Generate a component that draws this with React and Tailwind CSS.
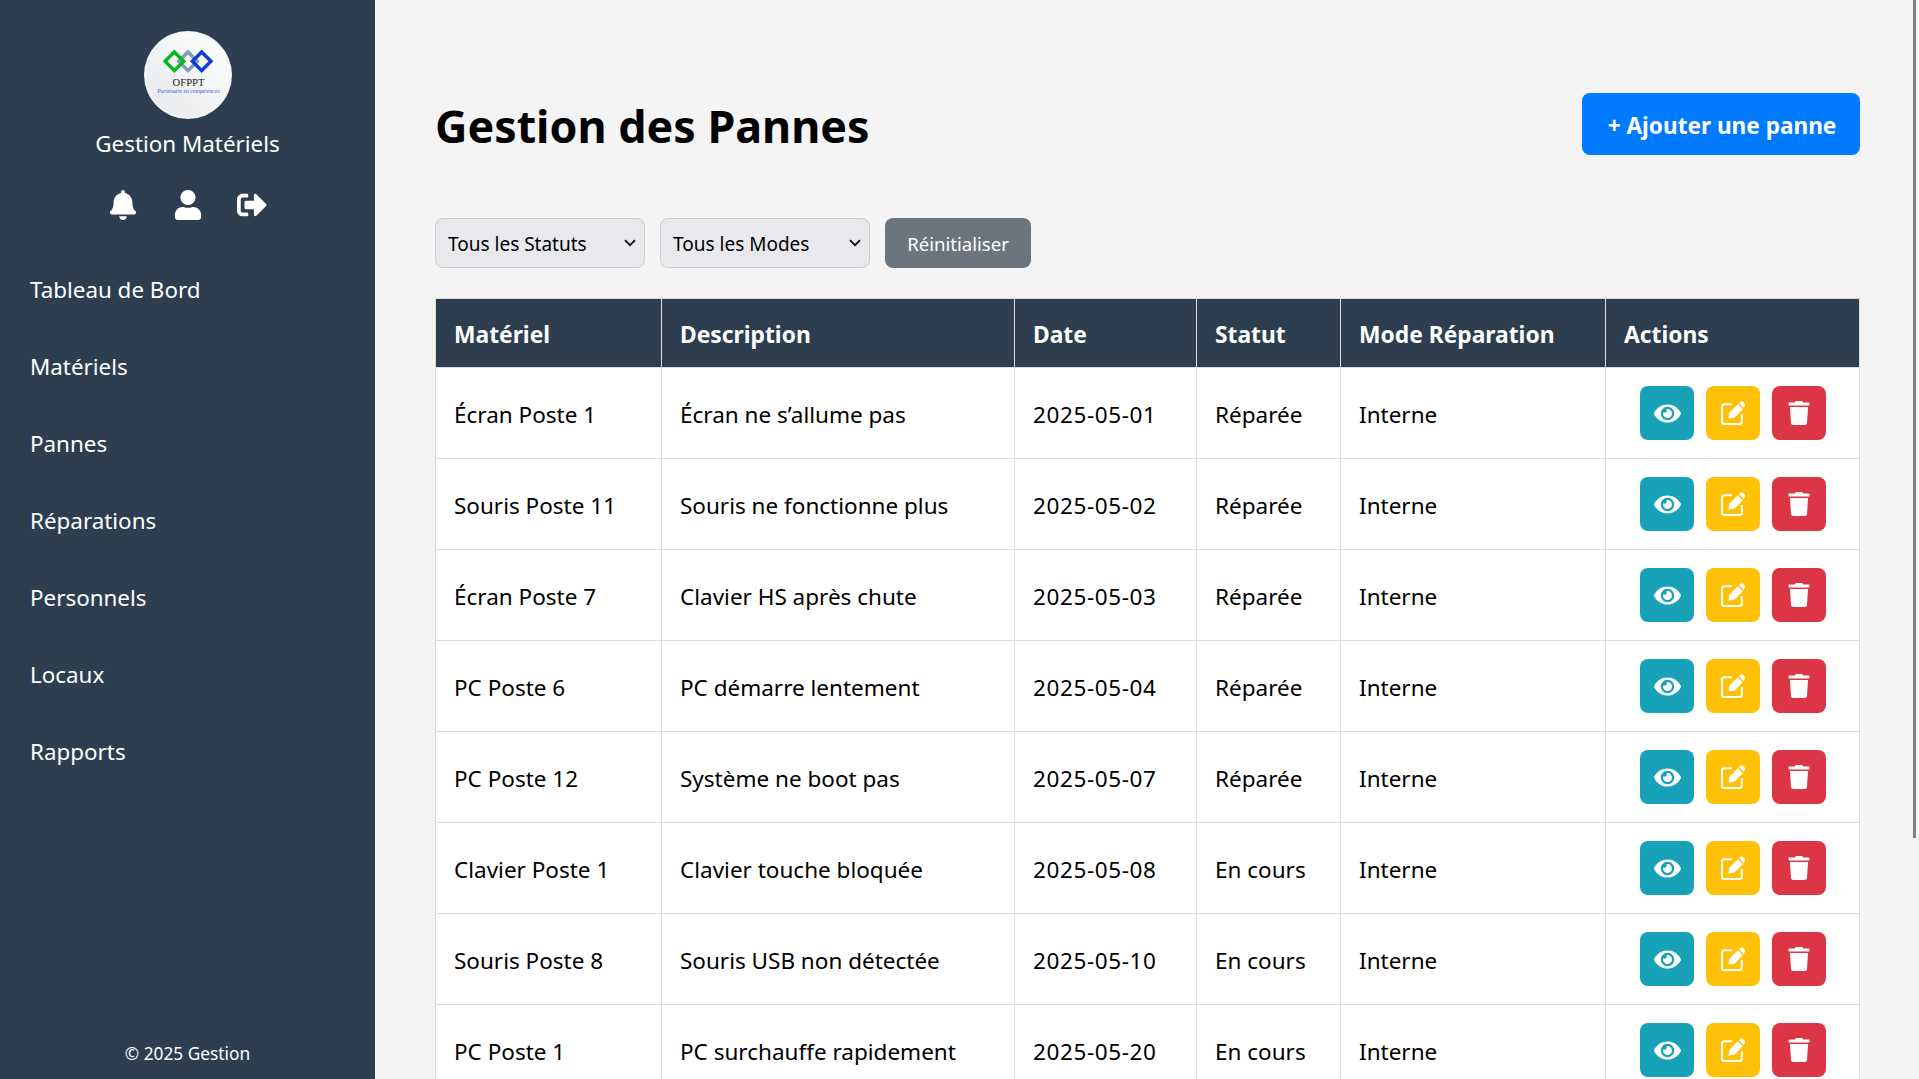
import { FaBell, FaUser, FaSignOutAlt, FaEye, FaTrash } from 'react-icons/fa'

const nav = ['Tableau de Bord', 'Matériels', 'Pannes', 'Réparations', 'Personnels', 'Locaux', 'Rapports']

const rows = [
  ['Écran Poste 1', 'Écran ne s’allume pas', '2025-05-01', 'Réparée', 'Interne'],
  ['Souris Poste 11', 'Souris ne fonctionne plus', '2025-05-02', 'Réparée', 'Interne'],
  ['Écran Poste 7', 'Clavier HS après chute', '2025-05-03', 'Réparée', 'Interne'],
  ['PC Poste 6', 'PC démarre lentement', '2025-05-04', 'Réparée', 'Interne'],
  ['PC Poste 12', 'Système ne boot pas', '2025-05-07', 'Réparée', 'Interne'],
  ['Clavier Poste 1', 'Clavier touche bloquée', '2025-05-08', 'En cours', 'Interne'],
  ['Souris Poste 8', 'Souris USB non détectée', '2025-05-10', 'En cours', 'Interne'],
  ['PC Poste 1', 'PC surchauffe rapidement', '2025-05-20', 'En cours', 'Interne'],
]

const headers = ['Matériel', 'Description', 'Date', 'Statut', 'Mode Réparation', 'Actions']

function Logo() {
  return (
    <svg viewBox="0 0 87 87" className="w-[88px] h-[88px]">
      <defs>
        <linearGradient id="disc" x1="0" y1="1" x2="1" y2="0">
          <stop offset="0" stopColor="#e6e8ea" />
          <stop offset="1" stopColor="#ffffff" />
        </linearGradient>
      </defs>
      <circle cx="43.5" cy="43.5" r="43.5" fill="#f2f5f7" />
      <circle cx="43.5" cy="43.5" r="41.5" fill="url(#disc)" />
      <rect x="37" y="23.5" width="13" height="13" transform="rotate(45 43.5 30)" fill="none" stroke="#7f9db8" strokeWidth="3.4" />
      <rect x="23.5" y="23.5" width="13" height="13" transform="rotate(45 30 30)" fill="none" stroke="#06b71e" strokeWidth="3.4" />
      <rect x="50.5" y="23.5" width="13" height="13" transform="rotate(45 57 30)" fill="none" stroke="#0b3fd1" strokeWidth="3.4" />
      <text x="44" y="54" textAnchor="middle" fontFamily="Liberation Serif, serif" fontSize="10.5" fill="#222">OFPPT</text>
      <text x="44" y="61.5" textAnchor="middle" fontFamily="Liberation Serif, serif" fontStyle="italic" fontSize="5.7" fill="#3f57d8">Partenaire en compétences</text>
    </svg>
  )
}

function EditIcon() {
  return (
    <svg viewBox="0 0 24 24" className="w-[24px] h-[24px]" fill="currentColor">
      <path d="M11 4.2H3.2A2.2 2.2 0 0 0 1 6.4V21.8A2.2 2.2 0 0 0 3.2 24H18.6A2.2 2.2 0 0 0 20.8 21.8V14" fill="none" stroke="currentColor" strokeWidth="2" transform="translate(0 -1)" />
      <path d="M7.5 17.5 8.3 11.7 16.8 3.2 21.8 8.2 13.3 16.7Z" />
      <path d="M18 2.2 19.6.7A1.6 1.6 0 0 1 21.8.7L23.8 2.7A1.6 1.6 0 0 1 23.8 4.9L22.8 6.9Z" />
    </svg>
  )
}

function Filter({ label }) {
  return (
    <div className="relative w-[210px] h-[50px]">
      <select className="appearance-none w-full h-full pl-[12px] pt-[3px] rounded-[8px] border border-[#ccc] bg-[#e9e9ed] text-[19px]">
        <option>{label}</option>
      </select>
      <svg viewBox="0 0 12 8" className="absolute right-[9px] top-[21px] w-[12px] h-[8px] pointer-events-none" fill="none" stroke="#111" strokeWidth="1.9">
        <path d="M1 1.2 6 6.2 11 1.2" />
      </svg>
    </div>
  )
}

export default function App() {
  return (
    <div className="relative flex h-screen overflow-hidden bg-[#f4f4f4] text-[22.5px] text-black font-['Noto_Sans',sans-serif]">
      {/* Sidebar */}
      <aside className="w-[375px] shrink-0 flex flex-col items-stretch bg-[#2c3e50] text-white">
        <div className="flex flex-col items-center pt-[31px]">
          <Logo />
          <div className="mt-[9px] text-[22.4px] leading-[32px]">Gestion Matériels</div>
          <div className="mt-[30px] flex items-center gap-[34.5px] text-[30px]">
            <FaBell />
            <FaUser />
            <FaSignOutAlt />
          </div>
        </div>
        <nav className="mt-[31px] flex flex-col px-[30px]">
          {nav.map(n => (
            <a key={n} className="h-[77px] flex items-center text-[22.4px]">{n}</a>
          ))}
        </nav>
        <div className="mt-auto pb-[13px] text-center text-[17.3px] leading-[24px]">© 2025 Gestion</div>
      </aside>

      {/* Main */}
      <main className="flex-1 pt-[93px] pl-[60px] pr-[60px]">
        <div className="flex items-center justify-between">
          <h1 className="h-[62px] text-[44.8px] leading-[66px] font-bold">Gestion des Pannes</h1>
          <button className="w-[278px] h-[62px] pt-[4px] pl-[2px] rounded-[8px] bg-[#007bff] text-white text-[22.6px] font-bold">+ Ajouter une panne</button>
        </div>

        <div className="mt-[63px] flex gap-[15px]">
          <Filter label="Tous les Statuts" />
          <Filter label="Tous les Modes" />
          <button className="w-[146px] h-[50px] pt-[1px] rounded-[8px] bg-[#6c757d] text-white text-[18.6px]">Réinitialiser</button>
        </div>

        <table className="mt-[30px] w-[1424px] table-fixed border-collapse bg-white">
          <colgroup>
            <col className="w-[226px]" />
            <col className="w-[353px]" />
            <col className="w-[182px]" />
            <col className="w-[144px]" />
            <col className="w-[265px]" />
            <col className="w-[254px]" />
          </colgroup>
          <thead>
            <tr className="h-[69px] bg-[#2c3e50] text-white">
              {headers.map(h => (
                <th key={h} className="border border-[#ddd] px-[18px] pt-[4px] text-left text-[22.8px] font-bold">{h}</th>
              ))}
            </tr>
          </thead>
          <tbody>
            {rows.map(r => (
              <tr key={r[0]} className="h-[91px]">
                {r.map((c, i) => (
                  <td key={i} className={i === 2 ? 'border border-[#ddd] px-[18px] pt-[4px] whitespace-nowrap tracking-[0.6px]' : 'border border-[#ddd] px-[18px] pt-[4px] whitespace-nowrap'}>{c}</td>
                ))}
                <td className="border border-[#ddd] pl-[34px] pr-0">
                  <div className="flex gap-[12px]">
                    <button className="w-[54px] h-[54px] rounded-[8px] bg-[#17a2b8] text-white text-[27px] flex items-center justify-center"><FaEye /></button>
                    <button className="w-[54px] h-[54px] rounded-[8px] bg-[#ffc107] text-white flex items-center justify-center"><EditIcon /></button>
                    <button className="w-[54px] h-[54px] rounded-[8px] bg-[#dc3545] text-white text-[24px] flex items-center justify-center"><FaTrash /></button>
                  </div>
                </td>
              </tr>
            ))}
          </tbody>
        </table>
      </main>

      {/* Scrollbar thumb */}
      <div className="absolute top-0 right-[3px] w-[3px] h-[838px] bg-[#808080]" />
    </div>
  )
}
